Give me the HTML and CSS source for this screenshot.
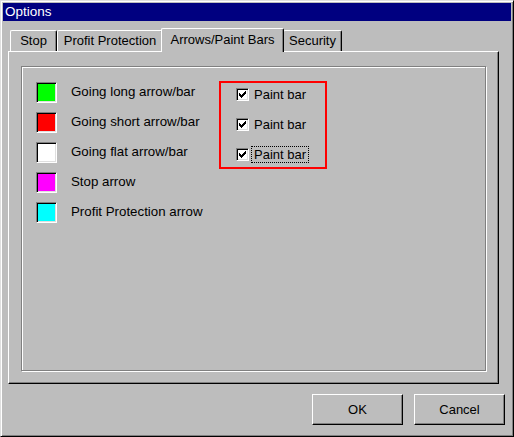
FILE: index.html
```html
<!DOCTYPE html>
<html lang="en">
<head>
  <meta charset="UTF-8" />
  <title>Options</title>
  <link rel="stylesheet" href="styles.css">
</head>
<body>

  <section class="window">
    <div class="titlebar">Options</div>

    <div class="tabs">
      <div class="tab tab-stop">Stop</div>
      <div class="tab tab-profit">Profit Protection</div>
      <div class="tab tab-arrows active">Arrows/Paint Bars</div>
      <div class="tab tab-security">Security</div>
    </div>

    <div class="panel">
      <div class="group">
        <div class="colors">
          <div class="color-row"><span class="swatch green"></span><span>Going long arrow/bar</span></div>
          <div class="color-row"><span class="swatch red"></span><span>Going short arrow/bar</span></div>
          <div class="color-row"><span class="swatch white"></span><span>Going flat arrow/bar</span></div>
          <div class="color-row"><span class="swatch magenta"></span><span>Stop arrow</span></div>
          <div class="color-row"><span class="swatch cyan"></span><span>Profit Protection arrow</span></div>
        </div>

        <div class="paint-box">
          <label class="check-row">
            <span class="checkbox"><svg width="7" height="7" viewBox="0 0 7 7"><rect x="0" y="2" width="1" height="3"/><rect x="1" y="3" width="1" height="3"/><rect x="2" y="4" width="1" height="3"/><rect x="3" y="3" width="1" height="3"/><rect x="4" y="2" width="1" height="3"/><rect x="5" y="1" width="1" height="3"/><rect x="6" y="0" width="1" height="3"/></svg></span>
            <span class="check-label">Paint bar</span>
          </label>
          <label class="check-row">
            <span class="checkbox"><svg width="7" height="7" viewBox="0 0 7 7"><rect x="0" y="2" width="1" height="3"/><rect x="1" y="3" width="1" height="3"/><rect x="2" y="4" width="1" height="3"/><rect x="3" y="3" width="1" height="3"/><rect x="4" y="2" width="1" height="3"/><rect x="5" y="1" width="1" height="3"/><rect x="6" y="0" width="1" height="3"/></svg></span>
            <span class="check-label">Paint bar</span>
          </label>
          <label class="check-row">
            <span class="checkbox"><svg width="7" height="7" viewBox="0 0 7 7"><rect x="0" y="2" width="1" height="3"/><rect x="1" y="3" width="1" height="3"/><rect x="2" y="4" width="1" height="3"/><rect x="3" y="3" width="1" height="3"/><rect x="4" y="2" width="1" height="3"/><rect x="5" y="1" width="1" height="3"/><rect x="6" y="0" width="1" height="3"/></svg></span>
            <span class="check-label focused">Paint bar</span>
          </label>
        </div>
      </div>
    </div>

    <div class="actions">
      <button class="btn">OK</button>
      <button class="btn">Cancel</button>
    </div>
  </section>

</body>
</html>
```

FILE: styles.css
```css
* {
  margin: 0;
  padding: 0;
  box-sizing: border-box;
}
body {
  font-family: 'Liberation Sans', Arial, sans-serif;
  font-size: 13px;
  color: #000;
  background: #bdbdbd;
}
.window {
  width: 514px;
  height: 437px;
  background: #bdbdbd;
  border-top: 1px solid #dfdfdf;
  border-left: 1px solid #dfdfdf;
  border-right: 1px solid #000;
  border-bottom: 1px solid #000;
  box-shadow: inset 1px 1px 0 #fff, inset -1px -1px 0 #808080;
  padding: 2px;
}
.titlebar {
  height: 18px;
  line-height: 18px;
  background: #000080;
  color: #fff;
  padding-left: 2px;
  font-size: 13.5px;
}

/* tabs */
.tabs {
  display: flex;
  align-items: flex-end;
  margin-top: 7px;
  margin-left: 7px;
  margin-bottom: -1px;
  height: 24px;
  position: relative;
  z-index: 2;
}
.tab {
  height: 21px;
  margin-bottom: 1px;
  line-height: 20px;
  background: #bdbdbd;
  border-top: 1px solid #fff;
  border-left: 1px solid #fff;
  border-right: 1px solid #000;
  border-radius: 2px 2px 0 0;
  box-shadow: inset -1px 0 0 #808080;
  text-align: center;
}
.tab-stop { width: 47px; }
.tab-profit { width: 106px; }
.tab-security { width: 59px; }
.tab.active {
  width: 123px;
  height: 24px;
  margin-bottom: 0;
  margin-left: -2px;
  margin-right: -1px;
  line-height: 21px;
  position: relative;
  z-index: 3;
}

/* tab page */
.panel {
  width: 491px;
  height: 333px;
  margin-left: 5px;
  border-top: 1px solid #fff;
  border-left: 1px solid #fff;
  border-right: 1px solid #000;
  border-bottom: 1px solid #000;
  box-shadow: inset -1px -1px 0 #808080;
  padding: 14px 0 0 12px;
}
.group {
  width: 465px;
  height: 305px;
  border: 1px solid #808080;
  box-shadow: 1px 1px 0 #fff, inset 1px 1px 0 #fff;
  display: flex;
  align-items: flex-start;
  padding: 10px 0 0 14px;
}
.colors {
  width: 183px;
}
.color-row {
  height: 30px;
  display: flex;
  align-items: center;
  gap: 14px;
}
.color-row span:last-child {
  margin-top: -2px;
  font-size: 13.3px;
}
.swatch {
  width: 21px;
  height: 21px;
  border-top: 1px solid #808080;
  border-left: 1px solid #808080;
  border-right: 1px solid #fff;
  border-bottom: 1px solid #fff;
  box-shadow: inset 1px 1px 0 #000, inset -1px -1px 0 #dfdfdf;
}
.green { background: #00ff00; }
.red { background: #ff0000; }
.white { background: #fff; }
.magenta { background: #ff00ff; }
.cyan { background: #00ffff; }

/* paint bar checkboxes */
.paint-box {
  width: 108px;
  height: 88px;
  margin-top: 4px;
  border: 2px solid #ff0000;
  padding: 0 0 2px 15px;
  display: flex;
  flex-direction: column;
  gap: 8px;
}
.check-row {
  height: 22px;
  display: flex;
  align-items: center;
}
.checkbox {
  width: 13px;
  height: 13px;
  background: #fff;
  border-top: 1px solid #808080;
  border-left: 1px solid #808080;
  border-right: 1px solid #fff;
  border-bottom: 1px solid #fff;
  box-shadow: inset 1px 1px 0 #000, inset -1px -1px 0 #dfdfdf;
  padding: 2px 0 0 2px;
}
.checkbox svg {
  display: block;
  fill: #000;
  shape-rendering: crispEdges;
}
.check-label {
  margin-left: 2px;
  padding: 0 2px;
  line-height: 15px;
  border: 1px dotted transparent;
}
.check-label.focused {
  border-color: #000;
}

/* buttons */
.actions {
  display: flex;
  justify-content: flex-end;
  gap: 11px;
  margin-top: 10px;
  padding-right: 6px;
}
.btn {
  width: 91px;
  height: 31px;
  font: inherit;
  color: #000;
  background: #bdbdbd;
  border-top: 1px solid #fff;
  border-left: 1px solid #fff;
  border-right: 1px solid #000;
  border-bottom: 1px solid #000;
  box-shadow: inset -1px -1px 0 #808080;
}
```
